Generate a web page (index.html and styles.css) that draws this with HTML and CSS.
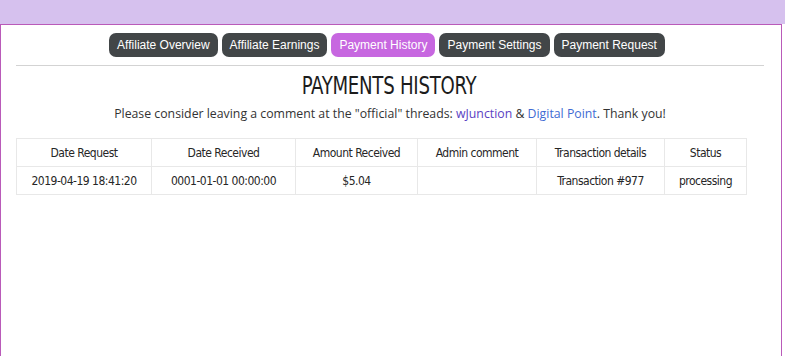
FILE: index.html
```html
<!DOCTYPE html>
<html>
	<head>
		<meta charset="utf-8">
		<title>Payments History</title>
		<link rel="stylesheet" href="styles.css">
	</head>
	<body>
		<div class="topbar"></div>
		<div class="panel">
			<ul class="tabs">
				<li class="tab">Affiliate Overview</li>
				<li class="tab">Affiliate Earnings</li>
				<li class="tab active">Payment History</li>
				<li class="tab">Payment Settings</li>
				<li class="tab">Payment Request</li>
			</ul>
			<div class="heading">
				<h1 class="title">PAYMENTS HISTORY</h1>
			</div>
			<p class="note">Please consider leaving a comment at the "official" threads: <a class="visited" href="#">wJunction</a> &amp; <a href="#">Digital Point</a>. Thank you!</p>
			<table class="history">
				<tr>
					<th class="c1">Date Request</th>
					<th class="c2">Date Received</th>
					<th class="c3">Amount Received</th>
					<th class="c4">Admin comment</th>
					<th class="c5">Transaction details</th>
					<th class="c6">Status</th>
				</tr>
				<tr>
					<td>2019-04-19 18:41:20</td>
					<td>0001-01-01 00:00:00</td>
					<td>$5.04</td>
					<td></td>
					<td>Transaction #977</td>
					<td>processing</td>
				</tr>
			</table>
		</div>
	</body>
</html>
```

FILE: styles.css
```css
* {
	margin: 0;
	padding: 0;
	box-sizing: border-box;
}

ul {
	list-style: none;
}

body {
	background: #ffffff;
	color: #333333;
	font-family: "Liberation Sans", Arial, sans-serif;
}

.topbar {
	height: 24px;
	background: #d6c1ee;
}

.panel {
	width: 782px;
	height: 332px;
	border: 1px solid #b95ab9;
	border-bottom: none;
	padding: 8px 17px 0 15px;
}

.tabs {
	display: flex;
	justify-content: center;
	gap: 4px;
	padding-bottom: 8px;
	padding-right: 6px;
	border-bottom: 1px solid #d3d3d3;
}

.tabs .tab {
	background: #424648;
	color: #ffffff;
	font-size: 12px;
	height: 24px;
	line-height: 24px;
	padding: 0 8px;
	border-radius: 7px;
	cursor: pointer;
}

.tabs .tab.active {
	background: #c767e0;
}

.heading {
	text-align: center;
	margin-top: 7px;
	padding-right: 2px;
}

.title {
	display: inline-block;
	font-family: "DejaVu Sans Condensed", sans-serif;
	font-weight: normal;
	font-size: 24px;
	line-height: 26px;
	color: #1c1c1c;
	letter-spacing: -0.3px;
	transform: scaleX(0.84);
}

.note {
	font-family: "Open Sans", sans-serif;
	font-size: 12.3px;
	text-align: center;
	margin-top: 6px;
	line-height: 18px;
}

.note a {
	color: #3f6bd3;
	text-decoration: none;
}

.note a.visited {
	color: #5b3fc3;
}

.history {
	border-collapse: collapse;
	margin-top: 15px;
	font-family: "DejaVu Sans Condensed", sans-serif;
	font-size: 12px;
	letter-spacing: -0.5px;
	color: #262626;
}

.history th,
.history td {
	border: 1px solid #e8e8e8;
	height: 28px;
	text-align: center;
	font-weight: normal;
}

.history .c1 { width: 135px; }
.history .c2 { width: 144px; }
.history .c3 { width: 122px; }
.history .c4 { width: 119px; }
.history .c5 { width: 128px; }
.history .c6 { width: 82px; }
```
